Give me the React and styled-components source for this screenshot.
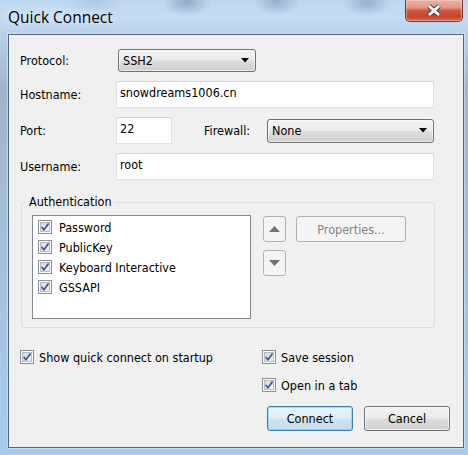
import React, { useId } from "react";
import styled, { createGlobalStyle } from "styled-components";

const GlobalStyle = createGlobalStyle`
  html, body {
    margin: 0;
    padding: 0;
  }
  body {
    width: 468px;
    height: 455px;
    overflow: hidden;
  }
`;

const Window = styled.div`
  width: 468px;
  height: 455px;
  display: flex;
  flex-direction: column;
  font-family: "DejaVu Sans Condensed", "DejaVu Sans", sans-serif;
  font-size: 12.5px;
  color: #000;
  background:
    radial-gradient(24px 15px at 187px 2px, rgba(85, 110, 145, 0.42), rgba(85, 110, 145, 0)),
    radial-gradient(24px 15px at 277px 1px, rgba(85, 110, 145, 0.38), rgba(85, 110, 145, 0)),
    radial-gradient(24px 15px at 367px 2px, rgba(85, 110, 145, 0.38), rgba(85, 110, 145, 0)),
    radial-gradient(28px 14px at 95px 1px, rgba(120, 145, 175, 0.25), rgba(120, 145, 175, 0)),
    linear-gradient(180deg, #bfd8f1 0px, #c6ddf3 18px, #b6d0ea 34px, #a2b6cb 90px, #a6bfd9 250px, #a8caea 400px, #a6cbec 455px);
`;

const TitleBar = styled.div`
  height: 34px;
  flex: none;
  display: flex;
  align-items: flex-start;
  justify-content: space-between;
  padding: 0 5px 0 8px;
`;

const Title = styled.div`
  font-family: "Open Sans", "Noto Sans", sans-serif;
  font-size: 15.5px;
  line-height: 20px;
  margin-top: 7px;
  color: #000;
  text-shadow: 0 0 8px rgba(255, 255, 255, 0.9);
`;

const CloseButton = styled.div`
  width: 58px;
  height: 22px;
  box-sizing: border-box;
  border: 1px solid #6b3a34;
  border-top: none;
  border-radius: 0 0 5px 5px;
  background: linear-gradient(180deg, #eab1a4 0%, #e29a89 35%, #cf5a43 50%, #c7432b 78%, #d46a50 100%);
  box-shadow: inset 0 0 0 1px rgba(255, 220, 210, 0.45);
  display: flex;
  align-items: center;
  justify-content: center;
`;

const FrameBody = styled.div`
  flex: 1;
  display: flex;
  padding: 0 4px 7px 8px;
`;

const Client = styled.div`
  flex: 1;
  border: 1px solid #56667a;
  box-shadow: 0 0 0 1px rgba(255, 255, 255, 0.35);
  background: #f0f0f0;
  padding: 14px 13px 15px 11px;
  display: flex;
  flex-direction: column;
`;

const Form = styled.div`
  display: grid;
  grid-template-columns: 96px 56px 32px 63px 167px;
  grid-template-rows: 23px 27px 27px 27px;
  row-gap: 9px;
  align-items: center;
`;

const Label = styled.span`
  grid-column: ${(p) => p.$col || 1};
  line-height: 15px;
`;

const TextBox = styled.div`
  grid-column: ${(p) => p.$span};
  align-self: stretch;
  background: #fff;
  border: 1px solid #dde1e7;
  border-top-color: #d3d7dd;
  padding: 3px 3px;
  line-height: 15px;
`;

const Combo = styled.div`
  grid-column: ${(p) => p.$span};
  justify-self: start;
  width: ${(p) => p.$w}px;
  height: ${(p) => p.$h}px;
  margin-left: ${(p) => p.$ml || 0}px;
  box-sizing: border-box;
  border: 1px solid #707070;
  border-radius: 3px;
  background: linear-gradient(180deg, #f3f3f3 0%, #ebebeb 48%, #dddddd 52%, #cfcfcf 100%);
  box-shadow: inset 0 0 0 1px rgba(255, 255, 255, 0.6);
  display: flex;
  align-items: center;
  justify-content: space-between;
  padding: 0 6px 0 4px;
`;

const Group = styled.fieldset`
  margin: 15px 0 0 1px;
  width: 414px;
  box-sizing: border-box;
  min-width: 0;
  border: 1px solid #d5dfe5;
  border-radius: 3px;
  padding: 6px 10px 8px 10px;
  display: flex;
  align-items: flex-start;
`;

const Legend = styled.legend`
  padding: 0 2px;
  margin-left: -5px;
  line-height: 14px;
`;

const ListBox = styled.div`
  width: 219px;
  height: 104px;
  box-sizing: border-box;
  background: #fff;
  border: 1px solid #828790;
  padding: 1px 5px;
`;

const ListItem = styled.div`
  height: 20px;
  display: flex;
  align-items: center;
  gap: 7px;
`;

const SideButtons = styled.div`
  display: flex;
  flex-direction: column;
  gap: 8px;
  margin: 1px 0 0 12px;
`;

const FlatButton = styled.div`
  width: ${(p) => p.$w}px;
  height: 26px;
  box-sizing: border-box;
  border: 1px solid #adb2b5;
  border-radius: 3px;
  background: #f4f4f4;
  color: #838383;
  display: flex;
  align-items: center;
  justify-content: center;
  margin-left: ${(p) => p.$ml || 0}px;
  margin-top: ${(p) => p.$mt || 0}px;
`;

const Options = styled.div`
  display: grid;
  grid-template-columns: 242px auto;
  grid-template-rows: 20px 20px;
  row-gap: 8px;
  margin-top: 19px;
`;

const Option = styled.label`
  grid-column: ${(p) => p.$col};
  grid-row: ${(p) => p.$row};
  display: flex;
  align-items: center;
  gap: 5px;
`;

const Actions = styled.div`
  display: flex;
  justify-content: flex-end;
  gap: 11px;
  margin-top: 11px;
`;

const Button = styled.div`
  width: 86px;
  height: 25px;
  box-sizing: border-box;
  border: 1px solid ${(p) => (p.$primary ? "#3c7fb1" : "#707070")};
  border-radius: 3px;
  background: ${(p) =>
    p.$primary
      ? "linear-gradient(180deg, #eaf4fb 0%, #dfeef8 48%, #cfe4f2 52%, #c3dcee 100%)"
      : "linear-gradient(180deg, #f3f3f3 0%, #ebebeb 48%, #dddddd 52%, #cfcfcf 100%)"};
  box-shadow: inset 0 0 0 1px ${(p) => (p.$primary ? "rgba(120, 215, 250, 0.75)" : "rgba(255, 255, 255, 0.7)")};
  display: flex;
  align-items: center;
  justify-content: center;
`;

const Check = () => {
  const id = useId();
  return (
    <svg width="14" height="14" viewBox="0 0 14 14" style={{ flex: "none" }}>
      <defs>
        <linearGradient id={id} x1="0" y1="0" x2="1" y2="1">
          <stop offset="0" stopColor="#cfd3d9" />
          <stop offset="1" stopColor="#f8f8f8" />
        </linearGradient>
      </defs>
      <rect x="0.5" y="0.5" width="13" height="13" fill="#fbfbfb" stroke="#8e8f8f" />
      <rect x="2.5" y="2.5" width="9" height="9" fill={`url(#${id})`} stroke="#b8bcc2" />
      <path d="M3.6 6.9 L5.9 9.7 L10.6 3.4" fill="none" stroke="#fff" strokeWidth="3" strokeOpacity="0.6" />
      <path d="M3.6 6.9 L5.9 9.7 L10.6 3.4" fill="none" stroke="#43599a" strokeWidth="1.8" />
    </svg>
  );
};

const DropArrow = () => (
  <svg width="8" height="5" viewBox="0 0 8 5">
    <path d="M0 0 H8 L4 4.5 Z" fill="#000" />
  </svg>
);

const Triangle = ({ up }) => (
  <svg width="11" height="6" viewBox="0 0 11 6">
    <path d={up ? "M0 6 H11 L5.5 0 Z" : "M0 0 H11 L5.5 6 Z"} fill="#727272" />
  </svg>
);

const CloseGlyph = () => (
  <svg width="16" height="13" viewBox="0 0 16 13">
    <path d="M3 2 L13 11 M13 2 L3 11" stroke="#3d3d3d" strokeWidth="5" />
    <path d="M3 2 L13 11 M13 2 L3 11" stroke="#fff" strokeWidth="3" />
  </svg>
);

const methods = ["Password", "PublicKey", "Keyboard Interactive", "GSSAPI"];

export default function App() {
  return (
    <>
      <GlobalStyle />
      <Window>
        <TitleBar>
          <Title>Quick Connect</Title>
          <CloseButton>
            <CloseGlyph />
          </CloseButton>
        </TitleBar>
        <FrameBody>
          <Client>
            <Form>
              <Label>Protocol:</Label>
              <Combo $span="2 / 5" $w={138} $h={23} $ml={2}>
                <span>SSH2</span>
                <DropArrow />
              </Combo>

              <Label>Hostname:</Label>
              <TextBox $span="2 / 6">snowdreams1006.cn</TextBox>

              <Label>Port:</Label>
              <TextBox $span="2 / 3">22</TextBox>
              <Label $col={4}>Firewall:</Label>
              <Combo $span="5 / 6" $w={167} $h={24}>
                <span>None</span>
                <DropArrow />
              </Combo>

              <Label>Username:</Label>
              <TextBox $span="2 / 6">root</TextBox>
            </Form>

            <Group>
              <Legend>Authentication</Legend>
              <ListBox>
                {methods.map((m) => (
                  <ListItem key={m}>
                    <Check />
                    <span>{m}</span>
                  </ListItem>
                ))}
              </ListBox>
              <SideButtons>
                <FlatButton $w={23}>
                  <Triangle up />
                </FlatButton>
                <FlatButton $w={23}>
                  <Triangle />
                </FlatButton>
              </SideButtons>
              <FlatButton $w={110} $ml={10} $mt={1}>
                Properties...
              </FlatButton>
            </Group>

            <Options>
              <Option $col={1} $row={1}>
                <Check />
                Show quick connect on startup
              </Option>
              <Option $col={2} $row={1}>
                <Check />
                Save session
              </Option>
              <Option $col={2} $row={2}>
                <Check />
                Open in a tab
              </Option>
            </Options>

            <Actions>
              <Button $primary>Connect</Button>
              <Button>Cancel</Button>
            </Actions>
          </Client>
        </FrameBody>
      </Window>
    </>
  );
}
